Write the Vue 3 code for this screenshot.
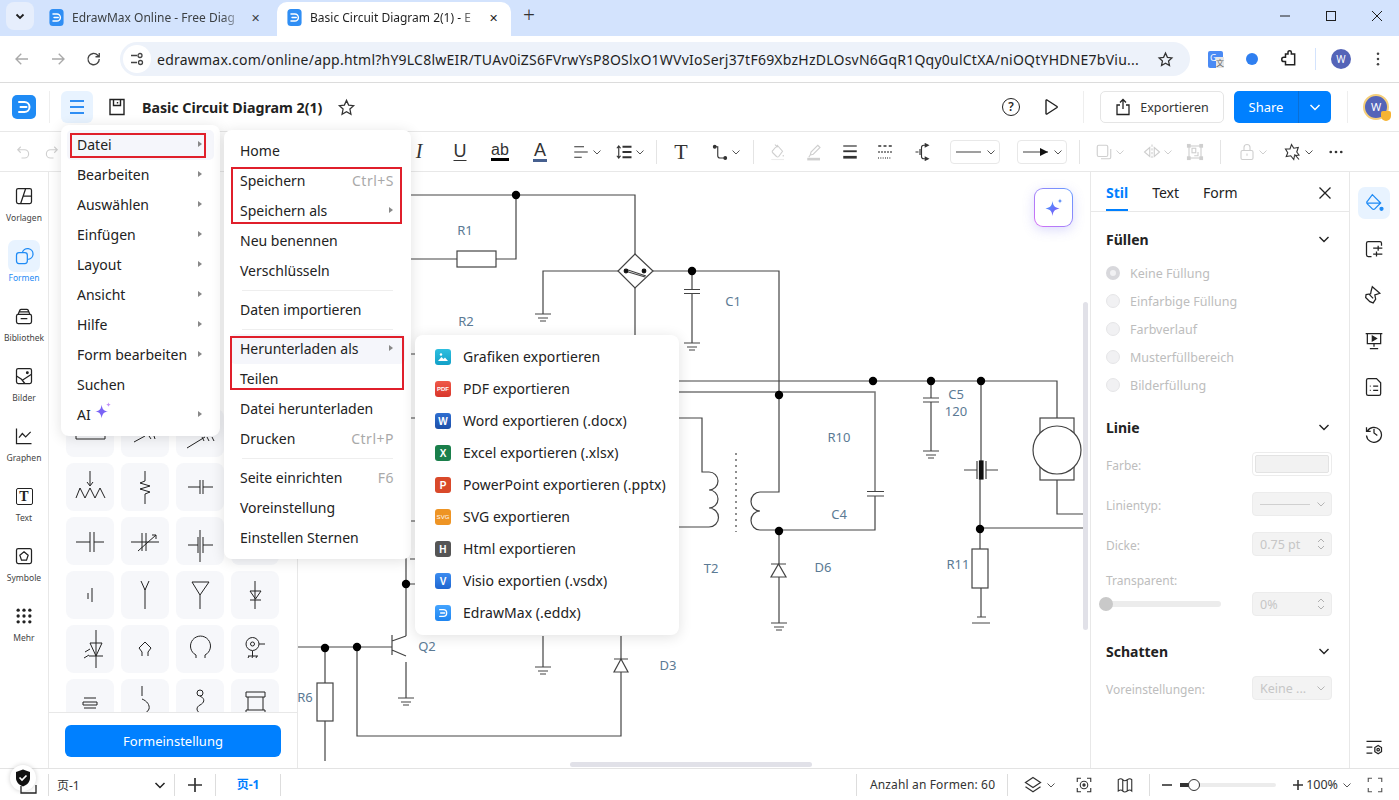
<script setup>
const logoMark = '<path d="M7 7h5.5a5 5 0 0 1 0 10H7M8.5 12h6" fill="none" stroke="#fff" stroke-width="2" stroke-linecap="round"/>'

const icons = {
  undo: '<path d="M9 5 5 9l4 4M5 9h9a5.5 5.5 0 0 1 0 11h-4"/>',
  redo: '<path d="m15 5 4 4-4 4M19 9h-9a5.5 5.5 0 0 0 0 11h4"/>',
  align: '<path d="M3 5h13M3 12h18M3 19h10"/>',
  spacing: '<path d="M5 4v16M2.5 7 5 4l2.500 3M2.500 17 5 20l2.500-3"/><path d="M10 5h12M10 12h12M10 19h12" stroke-width="2.400"/>',
  conn: '<path d="M5 5h4v12a3 3 0 0 0 3 3h7"/><circle cx="5" cy="5" r="1.800" fill="currentColor"/><circle cx="19" cy="20" r="1.800" fill="currentColor"/>',
  fill: '<path d="m11 3 7 8-5 7a2 2 0 0 1-3 0l-5-5a2 2 0 0 1 0-3zM8 2l3 4"/><path d="M19 16v2"/><path d="M3 22h17" stroke="#ececec"/>',
  pen: '<path d="m17 3 3 3-9 9-4 1 1-4zM7 16l-2 3"/><path d="M3 21.500h17" stroke-width="3.500"/>',
  lines: '<path d="M3 4h18" stroke-width="1.600"/><path d="M3 11h18" stroke-width="2.500"/><path d="M3 19h18" stroke-width="3.600"/>',
  dashes: '<path d="M3 4h4M10 4h4M17 4h4" stroke-width="2"/><path d="M3 12h2M7 12h2M11 12h2M15 12h2M19 12h2" stroke-width="2"/><path d="M3 20h1M6 20h1M9 20h1M12 20h1M15 20h1M18 20h1" stroke-width="2"/>',
  arrows: '<path d="M2 12h4M8 8v8M18 3h-5a3 3 0 0 0-3 3v12a3 3 0 0 0 3 3h5"/><path d="M15 1v4l4-2zM15 19v4l4-2z" fill="currentColor"/>',
  copy: '<rect x="3" y="3" width="14" height="15" rx="2"/><path d="M8 21h11a2 2 0 0 0 2-2V8"/>',
  flip: '<path d="M12 2v20" stroke-dasharray="3 2"/><path d="M9 6 2 12l7 6zM15 6l7 6-7 6z"/>',
  group: '<rect x="4" y="4" width="16" height="16"/><rect x="8" y="7" width="5" height="6"/><path d="M11 17h5v-5"/><rect x="2" y="2" width="3.500" height="3.500" fill="currentColor"/><rect x="18.500" y="2" width="3.500" height="3.500" fill="currentColor"/><rect x="2" y="18.500" width="3.500" height="3.500" fill="currentColor"/><rect x="18.500" y="18.500" width="3.500" height="3.500" fill="currentColor"/>',
  lock: '<rect x="4" y="10" width="16" height="12" rx="2"/><path d="M8 10V6a4 4 0 0 1 8 0v4M12 14v3"/>',
  wand: '<path d="m10 2 3 5 6-1-2 6 3 4-6 1-1 5-4-5-6 1 2-5-3-5 6 0z"/><path d="m14 15 6 7"/>',
  dots: '<circle cx="5" cy="12" r="1.800" fill="currentColor" stroke="none"/><circle cx="12" cy="12" r="1.800" fill="currentColor" stroke="none"/><circle cx="19" cy="12" r="1.800" fill="currentColor" stroke="none"/>',
  templates: '<rect x="3" y="3" width="18" height="18" rx="2"/><path d="M14 3 8 21M11 12h10"/>',
  shapes: '<rect x="3" y="8" width="13" height="13" rx="3"/><path d="M10 8a6.500 6.500 0 1 1 7 8"/>',
  library: '<rect x="3" y="10" width="18" height="11" rx="2"/><path d="M5 10 7 5a2 2 0 0 1 2-1h6a2 2 0 0 1 2 1l2 5M8 15h8M6 7h12"/>',
  images: '<rect x="3" y="3" width="18" height="18" rx="2"/><path d="m3 12 6 4 4 5M10 17l11-7"/><circle cx="16" cy="8" r="1" fill="currentColor"/>',
  graph: '<path d="M3 3v18h18M6 14l4-5 4 4 6-6"/>',
  symbols: '<rect x="3" y="3" width="18" height="18" rx="2"/><path d="m12 7 5 4-2 6H9l-2-6z"/>',
  more: '<g fill="currentColor" stroke="none"><circle cx="5" cy="5" r="2"/><circle cx="12" cy="5" r="2"/><circle cx="19" cy="5" r="2"/><circle cx="5" cy="12" r="2"/><circle cx="12" cy="12" r="2"/><circle cx="19" cy="12" r="2"/><circle cx="5" cy="19" r="2"/><circle cx="12" cy="19" r="2"/><circle cx="19" cy="19" r="2"/></g>',
  bucket: '<path d="M10 2 20 12l-7 7a2 2 0 0 1-3 0l-6-6a2 2 0 0 1 0-3zM4 12h16"/><circle cx="21" cy="19" r="1.800" fill="currentColor"/>',
  tune: '<path d="M21 8V5a2 2 0 0 0-2-2H5a2 2 0 0 0-2 2v14a2 2 0 0 0 2 2h4M11 11h11M11 18h11M17 8v6M15 15v6"/>',
  brush: '<path d="m10 2 9 8-6 2 1 5-3 4.500-4-1.500-5-5 .5-3.500 5.500-1 .5-3zM6 11l5 5"/><path d="M20 14h.01M22 18h.01M20 6h.01" stroke-width="2.200"/>',
  present: '<path d="M2 3h20M4 3v12h16V3M12 15v4M7 21h10"/><path d="m10 6 5 3-5 3z" fill="currentColor"/>',
  listdoc: '<path d="M5 2h10l5 5v13a2 2 0 0 1-2 2H5a2 2 0 0 1-2-2V4a2 2 0 0 1 2-2zM7 11h1M11 11h6M7 16h1M11 16h6"/>',
  history: '<path d="M3 5v5h5M4 10a9 9 0 1 1-1 5M12 7v5l4 3"/>',
  settings: '<path d="M3 4h18M3 11h7M3 18h7"/><path d="m17 9 4 2.500v5L17 19l-4-2.500v-5z"/><circle cx="17" cy="14" r="1.500"/>',
  layers: '<path d="m12 3 9 6-9 6-9-6z"/><path d="m3 14 9 6 9-6"/>',
  focus: '<path d="M8 3H3v5M16 3h5v5M8 21H3v-5M16 21h5v-5"/><circle cx="12" cy="12" r="5"/><circle cx="12" cy="12" r="1.500" fill="currentColor"/>',
  map: '<path d="M3 5c3-2 4-2 6 0s3 2 6 0 4-2 6 0v15c-2-2-3-2-6 0s-4 2-6 0-3-2-6 0zM9 5v15M15 5v15"/>',
  full: '<path d="M8 3H3v5M16 3h5v5M8 21H3v-5M16 21h5v-5"/>',
}

// Toolbar: w is the cell width, content is centred in it
const tools = [
  { w: 32, icon: 'undo', dim: true },
  { w: 26, icon: 'redo', dim: true },
  { w: 335 },
  { w: 38, text: 'I', cls: 'tx-i' },
  { w: 44, text: 'U', cls: 'tx-u' },
  { w: 36, text: 'ab', cls: 'tx-ab' },
  { w: 44, text: 'A', cls: 'tx-a' },
  { w: 50, icon: 'align', chev: true },
  { w: 36, icon: 'spacing', chev: true },
  { w: 8 }, { sep: true }, { w: 8 },
  { w: 34, text: 'T', cls: 'tx-t' },
  { w: 55, icon: 'conn', chev: true },
  { sep: true },
  { w: 50, icon: 'fill', dim: true },
  { w: 22, icon: 'pen', dim: true },
  { w: 50, icon: 'lines' },
  { w: 20, icon: 'dashes' },
  { w: 55, icon: 'arrows' },
  { w: 50, select: 'line' },
  { w: 17 },
  { w: 49, select: 'arrow' },
  { w: 13 }, { sep: true },
  { w: 61, icon: 'copy', chev: true, dim: true },
  { w: 35, icon: 'flip', chev: true, dim: true },
  { w: 40, icon: 'group', dim: true },
  { w: 5 }, { sep: true },
  { w: 66, icon: 'lock', chev: true, dim: true },
  { w: 26, icon: 'wand', chev: true },
  { w: 48, icon: 'dots' },
]

const railItems = [
  { icon: 'templates', label: 'Vorlagen' },
  { icon: 'shapes', label: 'Formen', active: true },
  { icon: 'library', label: 'Bibliothek' },
  { icon: 'images', label: 'Bilder' },
  { icon: 'graph', label: 'Graphen' },
  { text: 'T', label: 'Text' },
  { icon: 'symbols', label: 'Symbole' },
  { icon: 'more', label: 'Mehr' },
]

const tiles = [
  'M10 20v10h29V20', 'M13 33l11-6M28 27l2 3M33 27l1 3', 'M11 39l18-11M26 28l2 4M31 28l2 4M36 28l2 4', '',
  'M10 35l4-10 5 10 5-10 5 10 5-10 5 10M24 8v14M21 19l3 4 3-4', 'M24 8v10l-5 2 10 3-10 3 10 3-5 2v10', 'M12 24h12M27 24h10M24 17v14M27 17v14', '',
  'M10 25h14M28 25h10M24 15v20M28 15v20', 'M10 25h28M21 16v18M25 16v18M17 34l18-16M31 18l4 0 0 4', 'M12 28h10M27 28h10M24 13v32M22 20v16M27 20v16', '',
  'M22 22v6M26 17v14', 'M24 38V18M20 10l4 9 4-9', 'M24 38V24M16 11h17L24 24z', 'M24 10v28M19 20h11l-5.500 8zM19 29h11',
  'M30 5v38M24 18h12l-6 13zM23 31h14M24 24l-5 3M23 30l-5 3', 'M24 17l6 6-3 4v4M24 17l-6 6 3 4v4', 'M20 33v-3a10 10 0 1 1 9 0v3', 'M28 19a6.500 6.500 0 1 1-13 0 6.500 6.500 0 1 1 13 0M23.500 19a2 2 0 1 1-4 0 2 2 0 1 1 4 0M28 19h6M21.500 26v5M17 31h10M17 33l1-2M21 33l1-2M25 33l1-2',
  'M18 19h12M17 23h14v3H17zM18 29h12', 'M21 7v10M21 20c5 2 8 6 7 10-1 3-4 4-7 5', 'M27 14a3 3 0 1 1-6 0 3 3 0 1 1 6 0M24 17c6 3 4 7 0 9-4 2-4 6 0 8 2 1 3 3 3 5', 'M15 13h19v5H15zM17 18v13M32 18v13M15 31h19v5H15z',
]

const menu1 = [
  { label: 'Datei', arrow: true, hover: true },
  { label: 'Bearbeiten', arrow: true },
  { label: 'Auswählen', arrow: true },
  { label: 'Einfügen', arrow: true },
  { label: 'Layout', arrow: true },
  { label: 'Ansicht', arrow: true },
  { label: 'Hilfe', arrow: true },
  { label: 'Form bearbeiten', arrow: true },
  { label: 'Suchen' },
  { label: 'AI', arrow: true, spark: true },
]

const menu2 = [
  { label: 'Home' },
  { label: 'Speichern', key: 'Ctrl+S' },
  { label: 'Speichern als', arrow: true },
  { label: 'Neu benennen' },
  { label: 'Verschlüsseln' },
  { sep: true },
  { label: 'Daten importieren' },
  { sep: true },
  { label: 'Herunterladen als', arrow: true, hover: true },
  { label: 'Teilen' },
  { label: 'Datei herunterladen' },
  { label: 'Drucken', key: 'Ctrl+P' },
  { sep: true },
  { label: 'Seite einrichten', key: 'F6' },
  { label: 'Voreinstellung' },
  { label: 'Einstellen Sternen' },
]

const exportItems = [
  { label: 'Grafiken exportieren', cls: 'b-img' },
  { label: 'PDF exportieren', badge: 'PDF', cls: 'b-pdf' },
  { label: 'Word exportieren (.docx)', badge: 'W', cls: 'b-word' },
  { label: 'Excel exportieren (.xlsx)', badge: 'X', cls: 'b-excel' },
  { label: 'PowerPoint exportieren (.pptx)', badge: 'P', cls: 'b-ppt' },
  { label: 'SVG exportieren', badge: 'SVG', cls: 'b-svg' },
  { label: 'Html exportieren', badge: 'H', cls: 'b-html' },
  { label: 'Visio exportien (.vsdx)', badge: 'V', cls: 'b-visio' },
  { label: 'EdrawMax (.eddx)', cls: 'b-edraw' },
]

const fills = ['Keine Füllung', 'Einfarbige Füllung', 'Farbverlauf', 'Musterfüllbereich', 'Bilderfüllung']

const wires = [
  'M300 195H635V254', 'M410 259H457M496 259H516V195',
  'M543 314V271H618', 'M653 271H779V492H760a9 9.500 0 0 0 0 19a9 9.500 0 0 0 0 19H875V496',
  'M692 271V289M692 293V343', 'M635 288V335',
  'M420 381H1057V418',
  'M410 418H702V472h7a9 9 0 0 1 0 18a9 9 0 0 1 0 18a9 9 0 0 1 0 19H660',
  'M410 354H416M410 521H416M410 559H416',
  'M779 531V564M779 577V623',
  'M931 381V398M931 402V451',
  'M981 381V463M980 477V549M980 528H1083M981 588V617',
  'M1057 480V514H1083',
  'M406 500V636M406 584H420M406 662V698',
  'M298 647H392M325 648V683M325 721V761',
  'M357 647V736H621V672M621 659V636',
  'M543 636V667',
]

const grounds = [
  [543, 314], [692, 343], [931, 451], [779, 623], [406, 698], [543, 667],
]

const dots = [
  [516, 195], [692, 271], [873, 381], [931, 381], [981, 381], [779, 395],
  [779, 531], [980, 529], [325, 648], [357, 647], [406, 584],
]

const labels = [
  ['R1', 465, 235], ['R2', 466, 326], ['C1', 733, 306], ['R10', 839, 442],
  ['C5', 956, 399], ['120', 956, 416], ['C4', 839, 519], ['T2', 711, 573],
  ['D6', 823, 572], ['R11', 958, 569], ['Q2', 427, 651], ['D3', 668, 670], ['R6', 305, 702],
]
</script>

<template>
  <div class="window">
    <div class="tabstrip">
      <button class="tab-list">
        <svg width="12" height="12" viewBox="0 0 12 12"><path d="M2.500 4.500 6 8l3.500-3.500" fill="none" stroke="#1f1f1f" stroke-width="1.800"/></svg>
      </button>
      <div class="tab">
        <svg class="favicon" viewBox="0 0 24 24"><rect x="2" width="20" height="24" rx="5" fill="#2f8ef4"/><g v-html="logoMark"></g></svg>
        <span class="tab-title">EdrawMax Online - Free Diag</span>
        <span class="tab-x">✕</span>
      </div>
      <div class="tab active">
        <svg class="favicon" viewBox="0 0 24 24"><rect x="2" width="20" height="24" rx="5" fill="#2f8ef4"/><g v-html="logoMark"></g></svg>
        <span class="tab-title">Basic Circuit Diagram 2(1) - E</span>
        <span class="tab-x">✕</span>
      </div>
      <span class="tab-plus">+</span>
      <div class="win-controls">
        <svg width="12" height="12" viewBox="0 0 12 12"><path d="M1 6h10" stroke="#1f1f1f"/></svg>
        <svg width="12" height="12" viewBox="0 0 12 12"><rect x="1.500" y="1.500" width="9" height="9" fill="none" stroke="#1f1f1f"/></svg>
        <svg width="12" height="12" viewBox="0 0 12 12"><path d="m1 1 10 10M11 1 1 11" stroke="#1f1f1f"/></svg>
      </div>
    </div>

    <div class="addressbar">
      <svg class="nav dim" viewBox="0 0 24 24"><path d="M20 12H5M11 5l-7 7 7 7"/></svg>
      <svg class="nav dim" viewBox="0 0 24 24"><path d="M4 12h15M13 5l7 7-7 7"/></svg>
      <svg class="nav" viewBox="0 0 24 24"><path d="M19 12a7.500 7.500 0 1 1-2-5l2 2M19 4v5h-5"/></svg>
      <div class="url">
        <span class="site-ic">
          <svg width="16" height="16" viewBox="0 0 16 16"><path d="M2 4.500h6M2 11.500h6" stroke="#444" stroke-width="1.500" fill="none"/><circle cx="11" cy="4.500" r="2" fill="none" stroke="#444" stroke-width="1.300"/><circle cx="11.500" cy="11.500" r="2" fill="none" stroke="#444" stroke-width="1.300"/></svg>
        </span>
        <span class="url-text">edrawmax.com/online/app.html?hY9LC8lwEIR/TUAv0iZS6FVrwYsP8OSlxO1WVvIoSerj37tF69XbzHzDLOsvN6GqR1Qqy0ulCtXA/niOQtYHDNE7bViu...</span>
        <svg class="url-star" viewBox="0 0 24 24"><path d="m12 3 2.700 6 6.300.700-4.700 4.300 1.300 6.500-5.600-3.300L6.400 20.500l1.300-6.500L3 9.700 9.300 9z"/></svg>
      </div>
      <div class="ext">
        <span class="ext-translate">G<i>文</i></span>
        <span class="ext-dot"></span>
        <svg class="nav puzzle" viewBox="0 0 24 24"><path d="M9 6h3V4a2 2 0 0 1 4 0v2h4v13H9v-4H7a2.500 2.500 0 0 1 0-5h2z"/></svg>
        <span class="ext-sep"></span>
        <span class="avatar-s">W</span>
        <svg class="nav kebab" viewBox="0 0 24 24"><circle cx="12" cy="5" r="1.700"/><circle cx="12" cy="12" r="1.700"/><circle cx="12" cy="19" r="1.700"/></svg>
      </div>
    </div>

    <header class="appbar">
      <svg class="app-logo" viewBox="0 0 24 24"><rect width="24" height="24" rx="5" fill="#1f8bf5"/><g v-html="logoMark"></g></svg>
      <span class="vsep"></span>
      <button class="menu-btn">
        <svg width="18" height="18" viewBox="0 0 18 18"><path d="M2 3h14M2 9h14M2 15h14" stroke="#2f8ef4" stroke-width="1.800"/></svg>
      </button>
      <svg class="save-ic" viewBox="0 0 18 18"><path d="M2 1.500h14v15H2zM5.500 1.500v6h7v-6M9.500 4v1.500" fill="none" stroke="#222" stroke-width="1.400"/></svg>
      <span class="doc-title">Basic Circuit Diagram 2(1)</span>
      <svg class="doc-star" viewBox="0 0 24 24"><path d="m12 3 2.700 6 6.300.700-4.700 4.300 1.300 6.500-5.600-3.300L6.400 20.500l1.300-6.500L3 9.700 9.300 9z"/></svg>
      <div class="appbar-right">
        <span class="help">?</span>
        <svg class="play" viewBox="0 0 18 18"><path d="M4 2.500v13a.7.7 0 0 0 1 .5l10-6.500a.7.7 0 0 0 0-1L5 2a.7.7 0 0 0-1 .5z" fill="none" stroke="#222" stroke-width="1.400"/></svg>
        <span class="vsep"></span>
        <button class="export-btn">
          <svg width="16" height="18" viewBox="0 0 16 18"><path d="M5 7H2v9.500h12V7h-3M8 11V1.500M5 4.500l3-3 3 3" fill="none" stroke="#222" stroke-width="1.300"/></svg>
          Exportieren
        </button>
        <div class="share-btn">
          <span class="share-main">Share</span>
          <span class="share-arrow"><svg width="12" height="12" viewBox="0 0 12 12"><path d="M1.500 4 6 8.500 10.500 4" fill="none" stroke="#fff" stroke-width="1.500"/></svg></span>
        </div>
        <span class="vsep last"></span>
        <span class="avatar-l">W<i></i></span>
      </div>
    </header>

    <div class="toolbar">
      <template v-for="(t, i) in tools" :key="i">
        <span v-if="t.sep" class="tool-sep"></span>
        <div v-else class="tool" :class="{ dim: t.dim }" :style="{ width: t.w + 'px' }">
          <svg v-if="t.icon" class="ic" viewBox="0 0 24 24" v-html="icons[t.icon]"></svg>
          <span v-if="t.text" :class="t.cls">{{ t.text }}</span>
          <svg v-if="t.chev" class="chev" viewBox="0 0 10 10"><path d="M1.500 3.500 5 7l3.500-3.500"/></svg>
          <div v-if="t.select" class="tool-select">
            <svg width="28" height="10" viewBox="0 0 28 10">
              <path d="M1 5h25" stroke="#888" stroke-width="1.600"/>
              <path v-if="t.select === 'arrow'" d="M18 1l8 4-8 4z" fill="#111"/>
            </svg>
            <svg class="chev" viewBox="0 0 10 10"><path d="M1.500 3.500 5 7l3.500-3.500"/></svg>
          </div>
        </div>
      </template>
    </div>

    <div class="workspace">
      <nav class="rail">
        <div v-for="r in railItems" :key="r.label" class="rail-item" :class="{ active: r.active }">
          <span class="rail-ic">
            <svg v-if="r.icon" class="ic-r" viewBox="0 0 24 24" v-html="icons[r.icon]"></svg>
            <span v-else class="rail-t">{{ r.text }}</span>
          </span>
          <span class="rail-label">{{ r.label }}</span>
        </div>
      </nav>

      <aside class="shapes">
        <div class="shape-list">
          <div class="tile-grid">
            <div v-for="(d, i) in tiles" :key="i" class="tile">
              <svg v-if="d" width="48" height="48" viewBox="0 0 48 48"><path :d="d"/></svg>
            </div>
          </div>
        </div>
        <div class="shape-foot">
          <button class="shape-btn">Formeinstellung</button>
        </div>
      </aside>

      <main class="canvas">
        <svg class="circuit" viewBox="298 172 792 596" width="792" height="596">
          <g class="wires">
            <path v-for="(d, i) in wires" :key="i" :d="d"/>
            <path class="gray" d="M420 392H875V491"/>
            <rect x="457" y="251" width="39" height="16"/>
            <path d="M635 254 653 271 635 288 618 271ZM625 271l20 6M628 270l18 6"/>
            <circle cx="626" cy="271" r="1.800" class="solid"/>
            <circle cx="644" cy="271" r="1.800" class="solid"/>
            <path d="M684 289.500h16M684 293.500h16M923 398h16M923 402h16M867 491.500h17M867 496h17"/>
            <path d="M736 453V532" stroke-dasharray="2 4"/>
            <path d="M771 564h15M771 577h15l-7.500-13z"/>
            <path d="M614 659h14M614 672h14l-7-13z"/>
            <rect x="1040" y="418" width="34" height="62"/>
            <circle cx="1057" cy="450" r="24"/>
            <path d="M964 470h13M986 470h12M977 461v18M986 461v18"/>
            <rect x="979.500" y="461" width="3.500" height="18" class="solid"/>
            <rect x="972" y="549" width="16" height="39"/>
            <rect x="317" y="683" width="16" height="38"/>
            <path d="M977 617h9M972 623h18"/>
            <path d="M392 635v20M392 641l14-5M392 650l14 6"/>
            <path v-for="g in grounds" :key="g[0] + '-' + g[1]" :d="`M${g[0] - 8} ${g[1]}h16M${g[0] - 5} ${g[1] + 4}h10M${g[0] - 3} ${g[1] + 7}h6`"/>
          </g>
          <circle v-for="p in dots" :key="p[0] + '-' + p[1]" :cx="p[0]" :cy="p[1]" r="4.200" fill="#000"/>
          <text v-for="l in labels" :key="l[0]" :x="l[1]" :y="l[2]" class="label">{{ l[0] }}</text>
        </svg>
        <button class="ai-btn">
          <svg width="22" height="22" viewBox="0 0 22 22">
            <defs><linearGradient id="spark" x1="0" y1="0" x2="1" y2="1"><stop offset="0" stop-color="#3fa2ff"/><stop offset="1" stop-color="#8a4bf5"/></linearGradient></defs>
            <path d="M9.500 4c.8 5 2 6.500 7 7.500-5 1-6.200 2.500-7 7.500-.8-5-2-6.500-7-7.500 5-1 6.200-2.500 7-7.500z" fill="url(#spark)"/>
            <path d="M17 1.500c.3 1.800.8 2.300 2.500 2.500-1.700.3-2.200.8-2.500 2.500-.3-1.700-.8-2.200-2.500-2.500 1.700-.2 2.200-.7 2.500-2.500z" fill="#5a8cf8"/>
          </svg>
        </button>
        <span class="scroll-v"></span>
        <span class="scroll-h"></span>
      </main>

      <aside class="props">
        <div class="prop-tabs">
          <span class="prop-tab on">Stil</span>
          <span class="prop-tab">Text</span>
          <span class="prop-tab">Form</span>
          <svg class="prop-close" width="14" height="14" viewBox="0 0 14 14"><path d="m1.500 1.500 11 11M12.500 1.500l-11 11" stroke="#222" stroke-width="1.300"/></svg>
        </div>
        <div class="prop-body">
          <div class="sec-head first">Füllen
            <svg class="sec-chev" viewBox="0 0 12 12"><path d="M1.500 4 6 8.500 10.500 4"/></svg>
          </div>
          <div class="fills">
            <label v-for="(f, i) in fills" :key="f" class="fill-row">
              <span class="radio" :class="{ checked: i === 0 }"></span>{{ f }}
            </label>
          </div>

          <div class="sec-head">Linie
            <svg class="sec-chev" viewBox="0 0 12 12"><path d="M1.500 4 6 8.500 10.500 4"/></svg>
          </div>
          <div class="prop-row tight">
            <span>Farbe:</span>
            <span class="field swatch"><i></i></span>
          </div>
          <div class="prop-row">
            <span>Linientyp:</span>
            <span class="field">
              <i class="line-sample"></i>
              <svg class="chev soft" viewBox="0 0 10 10"><path d="M1.500 3.500 5 7l3.500-3.500"/></svg>
            </span>
          </div>
          <div class="prop-row">
            <span>Dicke:</span>
            <span class="field">0.75 pt
              <svg class="spin" viewBox="0 0 10 14"><path d="M2 5l3-3 3 3M2 9l3 3 3-3"/></svg>
            </span>
          </div>
          <div class="transp-label">Transparent:</div>
          <div class="slider-row">
            <div class="slider"><i></i></div>
            <span class="field">0%
              <svg class="spin" viewBox="0 0 10 14"><path d="M2 5l3-3 3 3M2 9l3 3 3-3"/></svg>
            </span>
          </div>

          <div class="sec-head shadow">Schatten
            <svg class="sec-chev" viewBox="0 0 12 12"><path d="M1.500 4 6 8.500 10.500 4"/></svg>
          </div>
          <div class="prop-row tight">
            <span>Voreinstellungen:</span>
            <span class="field">Keine ...
              <svg class="chev soft" viewBox="0 0 10 10"><path d="M1.500 3.500 5 7l3.500-3.500"/></svg>
            </span>
          </div>
        </div>
      </aside>

      <nav class="rail-right">
        <span class="rr-ic on"><svg class="ic-r" viewBox="0 0 24 24" v-html="icons.bucket"></svg></span>
        <span v-for="n in ['tune', 'brush', 'present', 'listdoc', 'history']" :key="n" class="rr-ic">
          <svg class="ic-r" viewBox="0 0 24 24" v-html="icons[n]"></svg>
        </span>
        <span class="rr-ic bottom"><svg class="ic-r" viewBox="0 0 24 24" v-html="icons.settings"></svg></span>
      </nav>
    </div>

    <footer class="statusbar">
      <div class="page-select">
        <span>页-1</span>
        <svg width="12" height="12" viewBox="0 0 12 12"><path d="M1.500 4 6 8.500 10.500 4" fill="none" stroke="#222" stroke-width="1.500"/></svg>
      </div>
      <div class="page-add">
        <svg width="16" height="16" viewBox="0 0 16 16"><path d="M8 1v14M1 8h14" stroke="#333" stroke-width="1.700"/></svg>
      </div>
      <div class="page-tab">页-1</div>
      <div class="status-right">
        <span class="count">Anzahl an Formen: 60</span>
        <span class="st-ic layers">
          <svg class="ic-r" viewBox="0 0 24 24" v-html="icons.layers"></svg>
          <svg class="chev" viewBox="0 0 10 10"><path d="M1.500 3.500 5 7l3.500-3.500"/></svg>
        </span>
        <svg class="ic-s focus" viewBox="0 0 24 24" v-html="icons.focus"></svg>
        <svg class="ic-s map" viewBox="0 0 24 24" v-html="icons.map"></svg>
        <span class="zoom-sep"></span>
        <svg class="zoom-minus" width="10" height="2" viewBox="0 0 10 2"><path d="M0 1h10" stroke="#333" stroke-width="1.600"/></svg>
        <div class="zoom-track"><i></i><b></b></div>
        <svg width="10" height="10" viewBox="0 0 10 10"><path d="M5 0v10M0 5h10" stroke="#333" stroke-width="1.600"/></svg>
        <span class="zoom-val">100%</span>
        <svg class="chev" viewBox="0 0 10 10"><path d="M1.500 3.500 5 7l3.500-3.500"/></svg>
        <svg class="ic-s full" viewBox="0 0 24 24" v-html="icons.full"></svg>
      </div>
    </footer>

    <!-- open menus, over everything -->
    <div class="menu menu-main">
      <div v-for="m in menu1" :key="m.label" class="mi" :class="{ hover: m.hover }">
        <span>{{ m.label }}</span>
        <svg v-if="m.spark" class="mi-spark" width="20" height="20" viewBox="0 0 22 22">
          <path d="M9.500 4c.8 5 2 6.500 7 7.500-5 1-6.200 2.500-7 7.500-.8-5-2-6.500-7-7.500 5-1 6.200-2.500 7-7.500z" fill="#7a63f5"/>
          <path d="M17 1.500c.3 1.800.8 2.300 2.500 2.500-1.700.3-2.200.8-2.500 2.500-.3-1.700-.8-2.200-2.500-2.500 1.700-.2 2.200-.7 2.500-2.500z" fill="#c08cf8"/>
        </svg>
        <i v-if="m.arrow" class="mi-arrow"></i>
      </div>
    </div>

    <div class="menu menu-file">
      <template v-for="(m, i) in menu2" :key="i">
        <div v-if="m.sep" class="m-sep"></div>
        <div v-else class="mi" :class="{ hover: m.hover }">
          <span>{{ m.label }}</span>
          <em v-if="m.key">{{ m.key }}</em>
          <i v-if="m.arrow" class="mi-arrow"></i>
        </div>
      </template>
    </div>

    <div class="menu menu-export">
      <div v-for="e in exportItems" :key="e.label" class="ei">
        <span class="badge" :class="e.cls">
          <template v-if="e.badge">{{ e.badge }}</template>
          <svg v-else-if="e.cls === 'b-img'" width="16" height="16" viewBox="0 0 16 16"><path d="m3 12 3.500-4 2 2 1.500-1.500L13 12z" fill="#fff"/><circle cx="6" cy="5.500" r="1.200" fill="#fff"/></svg>
          <svg v-else width="16" height="16" viewBox="0 0 24 24" v-html="logoMark"></svg>
        </span>
        <span>{{ e.label }}</span>
      </div>
    </div>

    <span class="mark m1"></span>
    <span class="mark m2"></span>
    <span class="mark m3"></span>

    <div class="shield">
      <svg width="16" height="18" viewBox="0 0 16 18"><path d="M8 .5 15 3v6c0 4-3 7-7 8.500C4 16 1 13 1 9V3z" fill="#111"/><path d="m4.500 8.500 2.500 2.500 4.500-4.500" fill="none" stroke="#fff" stroke-width="1.700"/></svg>
    </div>
    <svg class="peek" width="18" height="9" viewBox="0 0 18 9"><path d="M2 1v7h15V0" fill="none" stroke="#222" stroke-width="1.300"/></svg>
  </div>
</template>

<style>
html, body { overflow: hidden; background: #fff; }
</style>

<style scoped>
.window {
  width: 1399px;
  height: 800px;
  position: relative;
  overflow: hidden;
  display: flex;
  flex-direction: column;
  font-family: "Noto Sans", "Noto Sans CJK SC", sans-serif;
  color: #1f1f1f;
  background: #fff;
}
button { font-family: inherit; border: 0; padding: 0; }

/* browser */
.tabstrip {
  height: 36px;
  flex: none;
  background: #d3e3fd;
  display: flex;
  align-items: flex-start;
  padding-left: 6px;
}
.tab-list {
  width: 28px;
  height: 28px;
  margin-top: 2px;
  border-radius: 8px;
  background: #e6eefc;
  display: flex;
  align-items: center;
  justify-content: center;
}
.tab {
  width: 229px;
  height: 34px;
  margin-top: 2px;
  padding-left: 5px;
  margin-left: 9px;
  display: flex;
  align-items: center;
  font-size: 12px;
  color: #3c4043;
}
.tab.active {
  width: 225px;
  margin-left: 0;
  padding-left: 9px;
  background: #fff;
  border-radius: 10px 10px 0 0;
  color: #1f1f1f;
}
.favicon { width: 17px; height: 17px; flex: none; margin-right: 7px; margin-top: -3px; }
.tab-title {
  width: 171px;
  white-space: nowrap;
  overflow: hidden;
  margin-top: -3px;
  -webkit-mask-image: linear-gradient(to right, #000 88%, transparent);
  mask-image: linear-gradient(to right, #000 88%, transparent);
}
.tab-x { font-size: 11px; margin-left: 4px; margin-top: -3px; width: 16px; text-align: center; }
.tab-plus { font-size: 21px; line-height: 30px; margin-left: 12px; color: #333; font-weight: 300; }
.win-controls { margin-left: auto; display: flex; gap: 34px; height: 32px; align-items: center; padding-right: 16px; }

.addressbar {
  height: 47px;
  box-sizing: border-box;
  flex: none;
  display: flex;
  align-items: center;
  border-bottom: 1px solid #dcdcdc;
  border-radius: 8px 8px 0 0;
  background: #fff;
  padding-left: 13px;
  gap: 18px;
}
.nav { width: 18px; height: 18px; fill: none; stroke: #444; stroke-width: 1.800; flex: none; }
.nav.dim { stroke: #a9a9a9; }
.kebab { fill: #444; stroke: none; }
.url {
  width: 1070px;
  height: 34px;
  margin-left: -1px;
  border-radius: 17px;
  background: #edf2fa;
  display: flex;
  align-items: center;
  padding: 0 15px 0 3px;
  box-sizing: border-box;
  margin-right: -7px;
}
.site-ic {
  width: 28px;
  height: 28px;
  border-radius: 50%;
  background: #fff;
  display: flex;
  align-items: center;
  justify-content: center;
  margin-right: 6px;
  flex: none;
}
.url-text { font-size: 14px; letter-spacing: .23px; width: 983px; white-space: nowrap; overflow: hidden; flex: none; }
.url-star { width: 17px; height: 17px; margin-left: 17px; fill: none; stroke: #333; stroke-width: 1.800; flex: none; }
.ext { display: flex; align-items: center; margin-left: 7px; }
.ext-translate {
  width: 15px;
  height: 17px;
  background: #4a8af4;
  color: #fff;
  font-size: 9px;
  line-height: 14px;
  padding-left: 2px;
  box-sizing: border-box;
  position: relative;
  border-radius: 2px;
}
.ext-translate i { position: absolute; left: 8px; top: 6px; font-size: 8px; font-style: normal; color: #666; background: #e6e6e6; line-height: 11px; }
.ext-dot { width: 12px; height: 12px; border-radius: 50%; background: #2f7ff0; margin-left: 23px; }
.ext .nav { margin-left: 21px; }
.ext .puzzle { width: 20px; height: 20px; margin-left: 20px; margin-right: -1px; stroke: #222; }
.ext-sep { width: 1px; height: 22px; background: #d3e3fd; margin-left: 18px; }
.avatar-s {
  width: 20px;
  height: 20px;
  border-radius: 50%;
  background: #5464b8;
  color: #fff;
  font-size: 10px;
  line-height: 20px;
  text-align: center;
  margin-left: 15px;
}
.ext .kebab { margin-left: 18px; }

/* app header */
.appbar {
  height: 49px;
  flex: none;
  display: flex;
  align-items: center;
  padding-left: 12px;
  border-bottom: 1px solid #e8e8e8;
  box-sizing: border-box;
}
.app-logo { width: 24px; height: 24px; }
.vsep { width: 1px; height: 32px; background: #eee; margin-left: 13px; }
.menu-btn {
  width: 32px;
  height: 32px;
  margin-left: 11px;
  border-radius: 6px;
  background: #e8f3ff;
  display: flex;
  align-items: center;
  justify-content: center;
}
.save-ic { width: 18px; height: 18px; margin-left: 15px; }
.doc-title { font-size: 14.200px; font-weight: 700; margin-left: 16px; color: #222; white-space: nowrap; }
.doc-star { width: 19px; height: 19px; margin-left: 15px; fill: none; stroke: #333; stroke-width: 1.600; }
.appbar-right { margin-left: auto; display: flex; align-items: center; }
.help {
  width: 16px;
  height: 16px;
  border: 1.400px solid #222;
  border-radius: 50%;
  font-size: 12px;
  font-weight: 600;
  line-height: 16px;
  text-align: center;
}
.play { width: 18px; height: 18px; margin-left: 22px; }
.appbar-right .vsep { margin-left: 23px; }
.export-btn {
  width: 124px;
  height: 32px;
  margin-left: 16px;
  background: #fff;
  border: 1px solid #e5e5e5;
  border-radius: 5px;
  font-size: 12.500px;
  color: #333;
  display: flex;
  align-items: center;
  justify-content: center;
  gap: 9px;
}
.share-btn {
  width: 97px;
  height: 32px;
  margin-left: 10px;
  border-radius: 5px;
  background: #0080ff;
  color: #fff;
  display: flex;
  font-size: 13px;
  line-height: 32px;
}
.share-main { width: 64px; text-align: center; border-right: 1px solid #0a6fd6; }
.share-arrow { flex: 1; display: flex; align-items: center; justify-content: center; }
.appbar-right .vsep.last { margin-left: 16px; }
.avatar-l {
  width: 26px;
  height: 26px;
  box-sizing: border-box;
  margin: 0 10px 0 15px;
  border-radius: 50%;
  background: #5464b8;
  border: 2px solid #f5cf7a;
  color: #fff;
  font-size: 11px;
  line-height: 22px;
  text-align: center;
  position: relative;
}
.avatar-l i {
  position: absolute;
  right: -4px;
  bottom: -3px;
  width: 10px;
  height: 10px;
  background: #f5b332;
  border-radius: 2px 2px 5px 5px;
}

/* toolbar */
.toolbar {
  height: 40px;
  flex: none;
  display: flex;
  align-items: center;
  padding-left: 7px;
  border-bottom: 1px solid #e8e8e8;
  box-sizing: border-box;
  color: #333;
}
.tool {
  height: 32px;
  flex: none;
  display: flex;
  align-items: center;
  justify-content: center;
  gap: 2px;
}
.tool.dim { color: #cfcfcf; }
.ic { width: 18px; height: 18px; flex: none; fill: none; stroke: currentColor; stroke-width: 1.500; }
.chev { width: 10px; height: 10px; flex: none; fill: none; stroke: #555; stroke-width: 1; }
.tool.dim .chev { stroke: #cfcfcf; }
.tool-sep { width: 1px; height: 24px; background: #e4e4e4; flex: none; margin-right: -1px; }
.tool-select {
  width: 50px;
  height: 24px;
  flex: none;
  border: 1px solid #e8e8e8;
  border-radius: 4px;
  box-sizing: border-box;
  display: flex;
  align-items: center;
  justify-content: space-between;
  padding: 0 3px 0 4px;
}
.tx-i { font: italic 20px "Liberation Serif", serif; }
.tx-u { font: 18px "Liberation Sans", sans-serif; text-decoration: underline; text-underline-offset: 3px; }
.tx-ab { font: 16px "Liberation Sans", sans-serif; line-height: 16px; border-bottom: 3px solid #000; }
.tx-a { font: 18px "Liberation Sans", sans-serif; line-height: 17px; border-bottom: 3px solid #46608f; padding: 0 1px; }
.tx-t { font: 22px "Liberation Serif", serif; }

/* workspace */
.workspace { flex: 1; display: flex; min-height: 0; }
.rail {
  width: 49px;
  flex: none;
  border-right: 1px solid #e8e8e8;
  box-sizing: border-box;
  padding-top: 8px;
}
.rail-item {
  height: 60px;
  display: flex;
  flex-direction: column;
  align-items: center;
  color: #222;
}
.rail-ic {
  width: 32px;
  height: 32px;
  border-radius: 7px;
  display: flex;
  align-items: center;
  justify-content: center;
}
.ic-r { width: 20px; height: 20px; flex: none; fill: none; stroke: currentColor; stroke-width: 1.500; }
.rail-t {
  width: 15px;
  height: 15px;
  border: 1.500px solid #222;
  border-radius: 2px;
  font: 700 14px/15px "Liberation Serif", serif;
  text-align: center;
}
.rail-label { font-size: 8.500px; line-height: 12px; color: #444; white-space: nowrap; }
.rail-item.active .rail-ic { background: #e8f3ff; color: #1f8bf5; }
.rail-item.active .rail-label { color: #1f8bf5; }

.shapes {
  width: 249px;
  flex: none;
  display: flex;
  flex-direction: column;
  border-right: 1px solid #e8e8e8;
  box-sizing: border-box;
}
.shape-list { flex: 1; overflow: hidden; min-height: 0; padding: 237px 0 0 17px; }
.tile-grid { display: grid; grid-template-columns: repeat(4, 48px); gap: 6px 7px; }
.tile { width: 48px; height: 48px; background: #f6f7fa; border-radius: 8px; }
.tile path { fill: none; stroke: #222; stroke-width: 1; }
.shape-foot {
  height: 56px;
  flex: none;
  border-top: 1px solid #e8e8e8;
  box-sizing: border-box;
  padding: 12px 0 0 16px;
}
.shape-btn {
  width: 216px;
  height: 32px;
  border-radius: 6px;
  background: #0080ff;
  color: #fff;
  font-size: 13px;
}

.canvas { width: 792px; flex: none; position: relative; overflow: hidden; }
.circuit { display: block; }
.wires path, .wires rect, .wires circle { fill: none; stroke: #444; stroke-width: 1.200; }
.wires rect, .wires circle { fill: #fff; }
.wires .solid { fill: #111; stroke: #111; }
.wires .gray { stroke: #777; stroke-width: 1.500; }
.label { font-size: 13px; fill: #5b7a94; text-anchor: middle; font-family: "Noto Sans", sans-serif; }
.ai-btn {
  position: absolute;
  left: 736px;
  top: 16px;
  width: 39px;
  height: 39px;
  border-radius: 9px;
  border: 1.500px solid transparent;
  background: linear-gradient(#fff, #fff) padding-box, linear-gradient(45deg, #d86df5, #5f9bff) border-box;
  box-shadow: 0 3px 12px rgba(110, 110, 240, .25);
  display: flex;
  align-items: center;
  justify-content: center;
}
.scroll-v { position: absolute; left: 785px; top: 130px; width: 5px; height: 328px; border-radius: 3px; background: #e1e1e8; }
.scroll-h { position: absolute; left: 272px; top: 590px; width: 242px; height: 5px; border-radius: 3px; background: #e1e1e8; }

.props {
  width: 260px;
  flex: none;
  border-left: 1px solid #e8e8e8;
  border-right: 1px solid #e8e8e8;
  box-sizing: border-box;
  font-size: 12px;
  color: #bdbdbd;
}
.prop-tabs {
  height: 40px;
  display: flex;
  align-items: flex-start;
  border-bottom: 1px solid #e8e8e8;
  box-sizing: border-box;
  padding-left: 15px;
  gap: 24px;
  font-size: 14px;
  color: #222;
  position: relative;
}
.prop-tab { height: 39px; line-height: 42px; box-sizing: border-box; }
.prop-tab.on { color: #0080ff; font-weight: 700; border-bottom: 2px solid #0080ff; }
.prop-close { position: absolute; right: 17px; top: 14px; }
.prop-body { padding: 0 17px 0 15px; }
.sec-head {
  height: 28px;
  margin-top: 15px;
  padding-bottom: 2px;
  box-sizing: border-box;
  display: flex;
  align-items: center;
  justify-content: space-between;
  font-size: 14px;
  font-weight: 700;
  color: #222;
}
.sec-head.first { margin-top: 14px; }
.sec-head.shadow { margin-top: 22px; }
.sec-chev { width: 12px; height: 12px; fill: none; stroke: #222; stroke-width: 1.400; margin-right: 2px; }
.fills { margin-top: 5px; }
.fill-row { height: 28px; display: flex; align-items: center; font-size: 12.500px; }
.radio {
  width: 14px;
  height: 14px;
  border-radius: 50%;
  background: #f1f1f3;
  border: 1px solid #e6e6e8;
  box-sizing: border-box;
  margin-right: 10px;
  flex: none;
}
.radio.checked { background: #f1f1f3; border: 4px solid #d8d8dc; }
.prop-row {
  height: 24px;
  margin-top: 16px;
  display: flex;
  align-items: center;
  justify-content: space-between;
}
.prop-row.tight { margin-top: 10px; }
.prop-row > span:first-child { margin-top: 2px; }
.field {
  width: 80px;
  height: 24px;
  flex: none;
  box-sizing: border-box;
  border: 1px solid #ececec;
  border-radius: 4px;
  background: #f3f3f3;
  display: flex;
  align-items: center;
  justify-content: space-between;
  padding: 0 5px 0 7px;
  color: #c6c6c6;
  font-size: 12.500px;
}
.swatch { padding: 2px; background: #fff; }
.swatch i { display: block; width: 100%; height: 100%; background: #f2f2f2; border: 1px solid #e3e3e3; box-sizing: border-box; border-radius: 2px; }
.line-sample { width: 50px; height: 1px; background: #d0d0d0; }
.chev.soft { stroke: #b5b5b5; }
.spin { width: 10px; height: 14px; fill: none; stroke: #b0b0b0; stroke-width: 1; }
.transp-label { margin-top: 17px; line-height: 16px; }
.slider-row { margin-top: 3px; display: flex; justify-content: space-between; align-items: center; }
.slider { width: 115px; height: 6px; margin-left: 0; border-radius: 3px; background: #ececec; position: relative; }
.slider i { position: absolute; left: -7px; top: -4px; width: 14px; height: 14px; border-radius: 50%; background: #c9c9c9; }

.rail-right {
  flex: 1;
  display: flex;
  flex-direction: column;
  align-items: center;
  padding: 15px 1px 4px 0;
  color: #222;
}
.rr-ic {
  width: 32px;
  height: 32px;
  margin-bottom: 14px;
  border-radius: 7px;
  display: flex;
  align-items: center;
  justify-content: center;
}
.rr-ic.on { background: #e8f3ff; color: #1f8bf5; }
.rr-ic.bottom { margin: auto 0 0; }

/* status bar */
.statusbar {
  height: 32px;
  flex: none;
  border-top: 1px solid #e3e3e3;
  box-sizing: border-box;
  display: flex;
  align-items: center;
  font-size: 12px;
  padding-left: 48px;
  color: #333;
}
.page-select {
  width: 127px;
  height: 22px;
  box-sizing: border-box;
  border-left: 1px solid #ddd;
  border-right: 1px solid #ddd;
  padding: 0 8px 0 8px;
  display: flex;
  align-items: center;
  justify-content: space-between;
}
.page-add {
  width: 41px;
  height: 22px;
  box-sizing: border-box;
  border-right: 1px solid #ddd;
  display: flex;
  align-items: center;
  justify-content: center;
}
.page-tab {
  width: 65px;
  height: 22px;
  box-sizing: border-box;
  border-right: 1px solid #ddd;
  line-height: 22px;
  text-align: center;
  color: #0080ff;
  font-weight: 700;
}
.status-right { margin-left: auto; display: flex; align-items: center; padding-right: 15px; }
.count {
  height: 22px;
  line-height: 22px;
  padding: 0 12px 0 13px;
  border-left: 1px solid #ddd;
  border-right: 1px solid #ddd;
  white-space: nowrap;
  letter-spacing: .15px;
}
.st-ic { display: flex; align-items: center; gap: 3px; }
.layers { margin-left: 15px; }
.ic-s { width: 18px; height: 18px; fill: none; stroke: #333; stroke-width: 1.500; flex: none; }
.focus { margin-left: 19px; }
.map { margin-left: 23px; }
.zoom-sep { width: 1px; height: 22px; background: #ddd; margin-left: 15px; }
.zoom-minus { margin-left: 12px; }
.zoom-track { width: 96px; height: 4px; margin: 0 17px 0 8px; background: #ececec; border-radius: 2px; position: relative; }
.zoom-track i { position: absolute; left: 0; top: 0; width: 12px; height: 4px; background: #333; }
.zoom-track b { position: absolute; left: 8px; top: -4px; width: 12px; height: 12px; box-sizing: border-box; background: #fff; border: 1.500px solid #333; border-radius: 50%; }
.zoom-val { margin-left: 3px; margin-right: 4px; font-size: 12.500px; }
.full { margin-left: 14px; stroke: #555; }

/* menus */
.menu {
  position: absolute;
  background: #fff;
  border-radius: 8px;
  box-shadow: 0 2px 14px rgba(0, 0, 0, .12);
  box-sizing: border-box;
  font-size: 14px;
  color: #222;
  padding: 6px;
}
.menu-main { left: 61px; top: 125px; width: 159px; height: 311px; padding: 5px 6px; }
.menu-file { left: 224px; top: 130px; width: 187px; height: 429px; }
.menu-export { left: 415px; top: 335px; width: 264px; height: 300px; }
.mi {
  height: 30px;
  box-sizing: border-box;
  display: flex;
  align-items: center;
  padding: 0 0 2px 10px;
  border-radius: 5px;
  white-space: nowrap;
  position: relative;
}
.mi.hover { background: #f5f6fb; }
.mi em { margin-left: auto; margin-right: 11px; font-style: normal; color: #a9a9a9; letter-spacing: .5px; }
.mi-arrow {
  position: absolute;
  right: 12px;
  top: 11px;
  border-left: 4px solid #888;
  border-top: 3.500px solid transparent;
  border-bottom: 3.500px solid transparent;
}
.mi-spark { margin-left: 2px; margin-top: -6px; }
.m-sep { height: 1px; background: #eee; margin: 4px 12px 4px 12px; }
.ei {
  height: 32px;
  box-sizing: border-box;
  display: flex;
  align-items: center;
  padding: 0 0 2px 14px;
  white-space: nowrap;
  gap: 12px;
  letter-spacing: .05px;
}
.badge {
  width: 16px;
  height: 16px;
  flex: none;
  margin-top: 2px;
  border-radius: 3px;
  display: flex;
  align-items: center;
  justify-content: center;
  color: #fff;
  font: 700 10px "Liberation Sans", sans-serif;
}
.b-img { background: linear-gradient(#2dbfe0, #12a0c8); }
.b-pdf { background: linear-gradient(#ef5a4a, #d8352a); font-size: 6px; }
.b-word { background: linear-gradient(#2f6ed0, #1c4fa8); }
.b-excel { background: #1a7f4b; }
.b-ppt { background: #d9492a; }
.b-svg { background: #ee9424; font-size: 6px; font-weight: 400; }
.b-html { background: #555; }
.b-visio { background: linear-gradient(#3b8cf0, #1f66d0); }
.b-edraw { background: linear-gradient(#44a4ff, #1f85f0); }

.mark { position: absolute; border: 2px solid #e01f2b; box-sizing: border-box; pointer-events: none; }
.m1 { left: 70px; top: 133px; width: 136px; height: 25px; }
.m2 { left: 231px; top: 167px; width: 171px; height: 57px; }
.m3 { left: 230px; top: 336px; width: 174px; height: 54px; }

.shield {
  position: absolute;
  left: 10px;
  top: 765px;
  width: 26px;
  height: 26px;
  border-radius: 50%;
  background: #fff;
  box-shadow: 0 0 5px rgba(0, 0, 0, .18);
  display: flex;
  align-items: center;
  justify-content: center;
}
.peek { position: absolute; left: 19px; top: 785px; }
</style>
